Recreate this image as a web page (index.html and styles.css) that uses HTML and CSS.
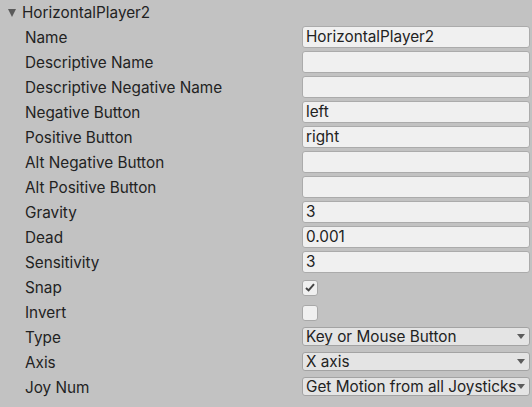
FILE: index.html
```html
<!DOCTYPE html>
<html>
<head>
<meta charset="utf-8">
<link rel="stylesheet" href="styles.css">
</head>
<body>
<div class="panel">
  <div class="header">
    <span class="fold"></span>
    <span class="title">HorizontalPlayer2</span>
  </div>
  <div class="row"><span class="label">Name</span><div class="field">HorizontalPlayer2</div></div>
  <div class="row"><span class="label">Descriptive Name</span><div class="field"></div></div>
  <div class="row"><span class="label">Descriptive Negative Name</span><div class="field"></div></div>
  <div class="row"><span class="label">Negative Button</span><div class="field">left</div></div>
  <div class="row"><span class="label">Positive Button</span><div class="field">right</div></div>
  <div class="row"><span class="label">Alt Negative Button</span><div class="field"></div></div>
  <div class="row"><span class="label">Alt Positive Button</span><div class="field"></div></div>
  <div class="row"><span class="label">Gravity</span><div class="field">3</div></div>
  <div class="row"><span class="label">Dead</span><div class="field">0.001</div></div>
  <div class="row"><span class="label">Sensitivity</span><div class="field">3</div></div>
  <div class="row"><span class="label">Snap</span><div class="check"><svg width="10" height="9" viewBox="0 0 10 9"><path d="M1 5 L3.6 7.4 L9 1.2" fill="none" stroke="#444444" stroke-width="2"/></svg></div></div>
  <div class="row"><span class="label">Invert</span><div class="check"></div></div>
  <div class="row"><span class="label">Type</span><div class="drop"><span class="dtext">Key or Mouse Button</span><span class="arrow"></span></div></div>
  <div class="row"><span class="label">Axis</span><div class="drop"><span class="dtext">X axis</span><span class="arrow"></span></div></div>
  <div class="row"><span class="label">Joy Num</span><div class="drop"><span class="dtext">Get Motion from all Joysticks</span><span class="arrow"></span></div></div>
</div>
</body>
</html>
```
FILE: styles.css
```css
html, body {
  margin: 0;
  padding: 0;
  background: #c2c2c2;
}
body {
  width: 532px;
  height: 407px;
  overflow: hidden;
  font-family: Inter, "Noto Sans", sans-serif;
  font-size: 15.3px;
  color: #222222;
}
.panel {
  display: flex;
  flex-direction: column;
}
.header {
  height: 25px;
  display: flex;
  align-items: center;
  padding-left: 8px;
}
.fold {
  width: 0;
  height: 0;
  border-left: 4.5px solid transparent;
  border-right: 4.5px solid transparent;
  border-top: 8px solid #5a5a5a;
  margin-right: 6px;
}
.title {
  line-height: 25px;
}
.row {
  height: 25px;
  display: flex;
  align-items: center;
  padding-left: 25px;
}
.label {
  width: 277px;
  flex: none;
  white-space: nowrap;
}
.field {
  box-sizing: border-box;
  width: 228px;
  height: 22px;
  margin-top: -1px;
  background: #f0f0f0;
  border: 1px solid #ababab;
  border-radius: 3px;
  padding-left: 3px;
  line-height: 20px;
  white-space: nowrap;
  overflow: hidden;
}
.check {
  box-sizing: border-box;
  width: 16px;
  height: 16px;
  background: #f0f0f0;
  border: 1px solid #a8a8a8;
  border-radius: 3px;
  display: flex;
  align-items: center;
  justify-content: center;
}
.drop {
  box-sizing: border-box;
  width: 228px;
  height: 19px;
  margin-top: -3px;
  background: #e4e4e4;
  border: 1px solid #a3a3a3;
  border-radius: 3px;
  display: flex;
  align-items: center;
  padding-left: 3px;
  padding-right: 4px;
}
.dtext {
  flex: 1;
  min-width: 0;
  white-space: nowrap;
  overflow: hidden;
  line-height: 17px;
}
.arrow {
  flex: none;
  width: 0;
  height: 0;
  border-left: 4.5px solid transparent;
  border-right: 4.5px solid transparent;
  border-top: 5px solid #5c5c5c;
}
```
